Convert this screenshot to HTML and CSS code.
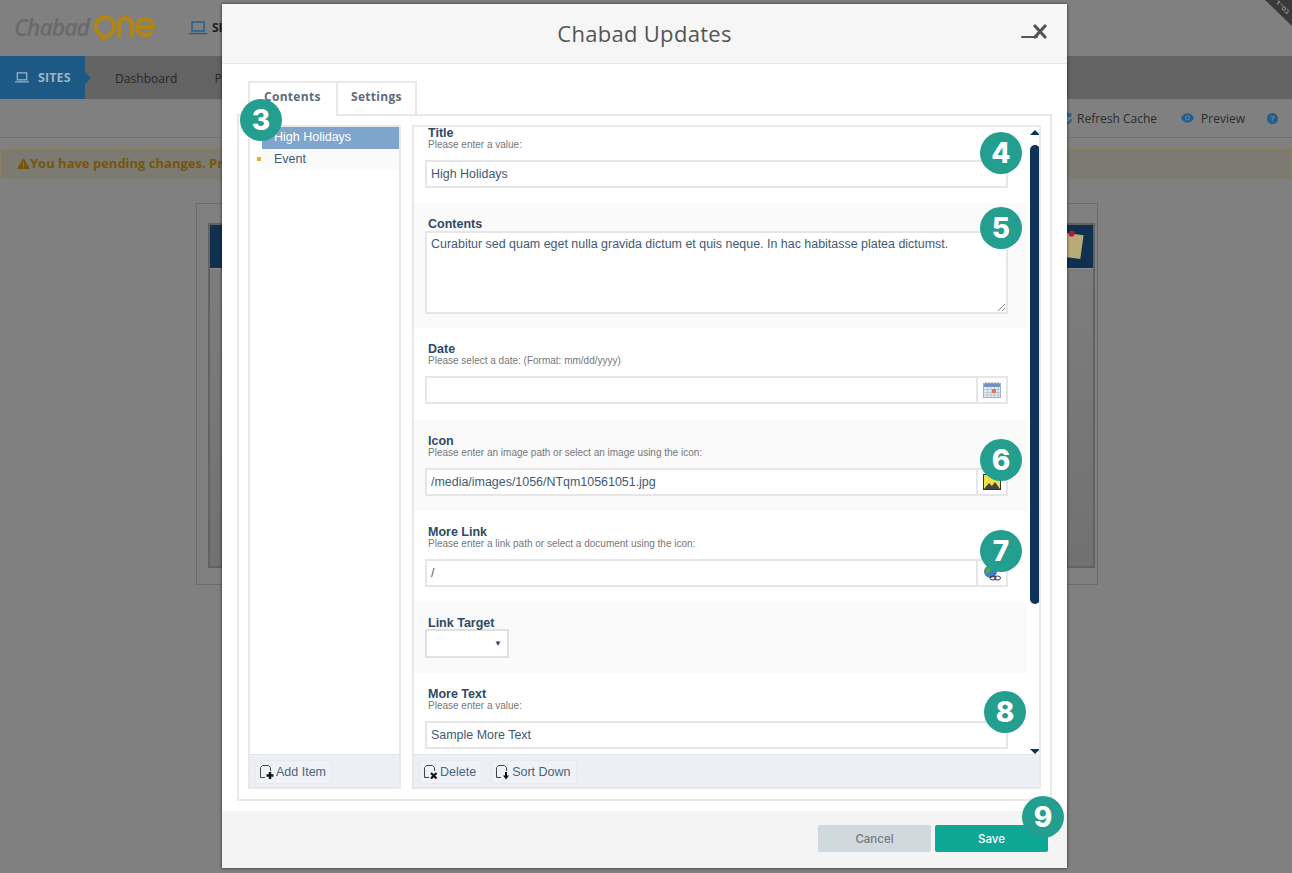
FILE: index.html
```html
<!DOCTYPE html>
<html lang="en">
<head>
    <meta charset="UTF-8">
    <title>Chabad Updates</title>
    <link rel="stylesheet" href="styles.css">
</head>
<body>
    <!-- page behind the dialog, colours already dimmed -->
    <div class="page">
        <header class="topbar">
            <div class="logo">
                <span class="logo-word">Chabad</span>
                <svg class="logo-mark" width="62" height="28" viewBox="0 0 62 28" fill="none" stroke="#b5860f" stroke-width="3.8" stroke-linecap="round" role="img" aria-label="One">
                    <path d="M8 21.200a9.200 9.200 0 1 1 5.500.2L8.500 25z"/>
                    <path d="M25 22V10.500a6.500 6.500 0 0 1 13 0V22"/>
                    <path d="M43 13h16a8 8 0 1 0-2.500 6"/>
                </svg>
            </div>
            <div class="section-name">
                <svg width="18" height="14" viewBox="0 0 18 14" fill="none" stroke="#1f5f8f" stroke-width="1.4"><rect x="3" y="1" width="12" height="9"/><path d="M0 12.6h18"/></svg>
                <span>SITES</span>
            </div>
            <div class="corner"><span>בס״ד</span></div>
        </header>
        <nav class="navbar">
            <div class="nav-active">
                <svg width="14" height="11" viewBox="0 0 18 14" fill="none" stroke="#9db3c4" stroke-width="1.6"><rect x="3" y="1" width="12" height="9"/><path d="M0 12.6h18"/></svg>
                <span>SITES</span>
            </div>
            <span class="nav-link">Dashboard</span>
            <span class="nav-link">Pages</span>
        </nav>
        <div class="actions">
            <span class="action action-refresh">
                <svg width="13" height="13" viewBox="0 0 14 14" fill="none" stroke="#1f5f8f" stroke-width="2"><path d="M2 6a5 5 0 0 1 9-2M12 8a5 5 0 0 1-9 2"/><path d="M11.500 1v3.500H8M2.500 13V9.500H6" stroke-width="1.400"/></svg>
                Refresh Cache
            </span>
            <span class="action">
                <svg width="13" height="10" viewBox="0 0 14 10"><path fill="#1f5f8f" d="M7 0c3 0 5.500 2 7 5-1.500 3-4 5-7 5S1.500 8 0 5c1.500-3 4-5 7-5z"/><circle cx="7" cy="5" r="2.600" fill="#808080"/><circle cx="7" cy="5" r="1.500" fill="#1f5f8f"/></svg>
                Preview
            </span>
            <span class="help">?</span>
        </div>
        <div class="alert">
            <svg width="13" height="11" viewBox="0 0 13 11"><path fill="#75560f" d="M6.500 0L13 11H0z"/><path fill="#7c7a70" d="M6 4h1v4H6zM6 8.800h1v1H6z"/></svg>
            <span>You have pending changes. Press Publish to apply them.</span>
        </div>
        <div class="preview">
            <div class="preview-inner">
                <div class="preview-head">
                    <div class="note"><i></i></div>
                </div>
            </div>
        </div>
    </div>

    <div class="modal">
        <div class="modal-head">
            <h1>Chabad Updates</h1>
            <svg class="close" width="28" height="16" viewBox="0 0 28 16" fill="none" stroke="#555" stroke-linecap="round"><path d="M1 14h15" stroke-width="2"/><path d="M14 3l10 11M24 3L14 14" stroke-width="3.200"/></svg>
        </div>

        <div class="modal-body">
            <div class="tabs">
                <div class="tab active">Contents</div>
                <div class="tab">Settings</div>
            </div>
            <div class="tab-panel">
                <div class="pane list-pane">
                    <ul class="items">
                        <li class="item selected">High Holidays</li>
                        <li class="item">Event</li>
                    </ul>
                    <div class="pane-tools">
                        <span class="tool">
                            <svg width="16" height="16" viewBox="0 0 16 16" fill="none"><path d="M6 13.500H1.500V3.500l2-2h6l2 2V7" stroke="#444"/><path d="M11 8v7M7.500 11.500h7" stroke="#111" stroke-width="2.400"/></svg>
                            Add Item
                        </span>
                    </div>
                </div>

                <div class="pane form-pane">
                    <div class="form-scroll">
                        <div class="form-inner">
                            <section class="field">
                                <label>Title</label>
                                <small>Please enter a value:</small>
                                <div class="input">High Holidays</div>
                            </section>
                            <section class="field band field-area">
                                <label>Contents</label>
                                <div class="input textarea">
                                    Curabitur sed quam eget nulla gravida dictum et quis neque. In hac habitasse platea dictumst.
                                    <svg class="grip" width="9" height="9" viewBox="0 0 9 9" stroke="#888"><path d="M1 8l7-7M5 8l3-3"/></svg>
                                </div>
                            </section>
                            <section class="field field-date">
                                <label>Date</label>
                                <small>Please select a date: (Format: mm/dd/yyyy)</small>
                                <div class="input-group">
                                    <div class="input"></div>
                                    <div class="input-btn">
                                        <svg width="18" height="16" viewBox="0 0 18 16"><rect x=".5" y="1.500" width="17" height="14" fill="#e6ebf4" stroke="#9fb0c8"/><rect x="1" y="2" width="16" height="3" fill="#6f93c9"/><path d="M3 0v3M6 0v3M9 0v3M12 0v3M15 0v3" stroke="#7f8ea6"/><path d="M1 7.500h16M1 10.500h16M1 13h16M4.500 5v10M8 5v10M11.500 5v10M15 5v10" stroke="#b9c6da"/><rect x="9" y="7" width="4" height="4" fill="#e0744f"/></svg>
                                    </div>
                                </div>
                            </section>
                            <section class="field band">
                                <label>Icon</label>
                                <small>Please enter an image path or select an image using the icon:</small>
                                <div class="input-group">
                                    <div class="input">/media/images/1056/NTqm10561051.jpg</div>
                                    <div class="input-btn">
                                        <svg width="18" height="16" viewBox="0 0 18 16"><rect x=".5" y=".5" width="17" height="15" fill="#f2e04a" stroke="#333"/><path d="M1 15l5-6 3 3 3-4 5 7z" fill="#444"/></svg>
                                    </div>
                                </div>
                            </section>
                            <section class="field">
                                <label>More Link</label>
                                <small>Please enter a link path or select a document using the icon:</small>
                                <div class="input-group">
                                    <div class="input">/</div>
                                    <div class="input-btn">
                                        <svg width="18" height="16" viewBox="0 0 18 16" fill="none"><circle cx="7.500" cy="6.500" r="6.500" fill="#3d7fc4"/><path d="M3 3c2-1 4-1 5 1S5 7 4 9 2 6 3 3z" fill="#5aa34a"/><ellipse cx="10" cy="13" rx="3" ry="2" stroke="#334"/><ellipse cx="14.500" cy="13" rx="3" ry="2" stroke="#334"/></svg>
                                    </div>
                                </div>
                            </section>
                            <section class="field band field-select">
                                <label>Link Target</label>
                                <div class="select"><span>▼</span></div>
                            </section>
                            <section class="field">
                                <label>More Text</label>
                                <small>Please enter a value:</small>
                                <div class="input">Sample More Text</div>
                            </section>
                        </div>
                        <div class="scrollbar">
                            <i class="arrow up"></i>
                            <div class="thumb"></div>
                            <i class="arrow down"></i>
                        </div>
                    </div>
                    <div class="pane-tools">
                        <span class="tool">
                            <svg width="16" height="16" viewBox="0 0 16 16" fill="none"><path d="M6 13.500H1.500V3.500l2-2h6l2 2V7" stroke="#444"/><path d="M8 9l5.500 5.500M13.500 9L8 14.500" stroke="#111" stroke-width="2.200"/></svg>
                            Delete
                        </span>
                        <span class="tool">
                            <svg width="16" height="16" viewBox="0 0 16 16" fill="none"><path d="M6 13.500H1.500V3.500l2-2h6l2 2V7" stroke="#444"/><path d="M11 8v4" stroke="#111" stroke-width="2"/><path d="M8 11.500h6L11 15.500z" fill="#111"/></svg>
                            Sort Down
                        </span>
                    </div>
                </div>
            </div>
        </div>

        <div class="modal-foot">
            <button class="btn btn-cancel">Cancel</button>
            <button class="btn btn-save">Save</button>
        </div>
    </div>

    <!-- numbered callouts over the dialog -->
    <span class="badge b3">3</span>
    <span class="badge b4">4</span>
    <span class="badge b5">5</span>
    <span class="badge b6">6</span>
    <span class="badge b7">7</span>
    <span class="badge b8">8</span>
    <span class="badge b9">9</span>
</body>
</html>
```

FILE: styles.css
```css
* {
    margin: 0;
    padding: 0;
    box-sizing: border-box;
}

html, body {
    height: 100%;
    overflow: hidden;
}

body {
    background: #808080;
    font-family: 'Liberation Sans', Arial, sans-serif;
    position: relative;
}

/* Page behind the dialog */
.page {
    height: 873px;
    font-family: 'Open Sans', sans-serif;
}

.topbar {
    height: 56px;
    padding-left: 14px;
    display: flex;
    align-items: center;
    position: relative;
}

.logo {
    display: flex;
    align-items: center;
    width: 175px;
}

.logo-word {
    font-size: 23px;
    font-style: italic;
    font-weight: 600;
    letter-spacing: -1px;
    color: #6a6a6a;
    width: 80px;
    margin-top: -3px;
}

.section-name {
    display: flex;
    align-items: center;
    gap: 5px;
    font-size: 12px;
    font-weight: 700;
    color: #1c1c1c;
    margin-top: -1px;
}

.corner {
    position: absolute;
    top: 0;
    right: 0;
    width: 27px;
    height: 26px;
    background: #3a3a3a;
    clip-path: polygon(0 0, 100% 0, 100% 100%);
}

.corner span {
    position: absolute;
    top: 3px;
    right: 1px;
    font: 7px 'DejaVu Sans', sans-serif;
    color: #bbb;
    transform: rotate(45deg);
}

.navbar {
    height: 43px;
    background: #636363;
    display: flex;
    align-items: center;
}

.nav-active {
    width: 85px;
    height: 43px;
    background: #1c5a85;
    display: flex;
    align-items: center;
    gap: 9px;
    padding-left: 15px;
    font-size: 12.5px;
    font-weight: 700;
    letter-spacing: 0.1px;
    color: #9db3c4;
    position: relative;
    margin-right: 30px;
}

.nav-active::after {
    content: "";
    position: absolute;
    left: 85px;
    top: 16px;
    border-left: 6px solid #1c5a85;
    border-top: 6px solid transparent;
    border-bottom: 6px solid transparent;
}

.nav-link {
    font-size: 12.1px;
    color: #262626;
    margin-right: 37px;
    padding-top: 1px;
}

.actions {
    height: 39px;
    border-bottom: 1px solid #8c6f2c;
    display: flex;
    justify-content: flex-end;
    align-items: center;
    gap: 24px;
    padding-right: 14px;
    font-size: 12px;
    color: #2c2c2c;
}

.action {
    display: flex;
    align-items: center;
    gap: 7px;
}

.action-refresh {
    gap: 4px;
}

.help {
    width: 11px;
    height: 11px;
    border-radius: 50%;
    background: #1f5f8f;
    color: #808080;
    font-size: 9px;
    font-weight: 700;
    line-height: 11px;
    text-align: center;
    margin-left: -2px;
}

.alert {
    margin-top: 10px;
    height: 32px;
    background: #7d7a71;
    border: 1px solid #8a7f63;
    border-radius: 4px;
    display: flex;
    align-items: center;
    padding: 0 0 2px 16px;
    font-size: 13px;
    font-weight: 700;
    color: #75560f;
}

.preview {
    margin: 23px 0 0 196px;
    width: 902px;
    height: 382px;
    border: 1px solid #6b6b6b;
    padding: 19px 2px 16px 11px;
}

.preview-inner {
    height: 100%;
    border: 2px solid #626262;
    background: linear-gradient(#7f7f7f, #717171);
}

.preview-head {
    height: 44px;
    background: #10304f;
    border-bottom: 1px solid #8a8a8a;
    position: relative;
}

.note {
    position: absolute;
    top: 9px;
    right: 11px;
    width: 17px;
    height: 24px;
    background: #b9ab78;
    transform: rotate(8deg);
}

.note i {
    position: absolute;
    top: -3px;
    left: 2px;
    width: 6px;
    height: 6px;
    border-radius: 50%;
    background: #b51a2e;
}

/* Dialog */
.modal {
    position: absolute;
    top: 4px;
    left: 222px;
    width: 845px;
    height: 864px;
    background: #fff;
    box-shadow: 0 0 3px rgba(0,0,0,0.7);
    display: flex;
    flex-direction: column;
}

.modal-head {
    height: 60px;
    flex: none;
    background: #f6f6f6;
    border-bottom: 1px solid #e8e8e8;
    display: flex;
    align-items: center;
    justify-content: center;
    position: relative;
}

.modal-head h1 {
    font: 400 22px 'Open Sans', sans-serif;
    color: #555;
    letter-spacing: 0.3px;
    margin-top: -1px;
}

.close {
    position: absolute;
    right: 18px;
    top: 19px;
}

.modal-body {
    flex: 1;
    padding: 17px 15px 10px;
    min-height: 0;
    display: flex;
    flex-direction: column;
}

.tabs {
    display: flex;
    padding-left: 11px;
    margin-bottom: -2px;
    position: relative;
}

.tab {
    height: 35px;
    padding: 0 13px;
    border: 2px solid #e8e8e8;
    font: 700 12px/28px 'Open Sans', sans-serif;
    letter-spacing: 0.3px;
    color: #5d6b7c;
}

.tab.active {
    width: 88px;
    border-right: 0;
    border-bottom-color: #fff;
    padding: 0 14px;
}

.tab + .tab {
    width: 81px;
}

.tab-panel {
    flex: 1;
    min-height: 0;
    border: 2px solid #e8e8e8;
    padding: 9px 9px 10px;
    display: flex;
    gap: 11px;
}

.pane {
    border: 2px solid #e8e8e8;
    display: flex;
    flex-direction: column;
    min-height: 0;
}

.list-pane {
    width: 153px;
    flex: none;
}

.form-pane {
    flex: 1;
    min-width: 0;
}

.items {
    flex: 1;
    list-style: none;
    padding-left: 12px;
}

.item {
    height: 21px;
    padding-left: 12px;
    font-size: 12.5px;
    line-height: 21px;
    color: #3f5a75;
    background: #fafafa;
    position: relative;
}

.item.selected {
    height: 22px;
    background: #7fa5cc;
    color: #fff;
}

.item:not(.selected)::before {
    content: "";
    position: absolute;
    left: -5px;
    top: 8px;
    width: 4px;
    height: 4px;
    background: #f7ab1b;
}

.pane-tools {
    height: 33px;
    flex: none;
    background: #eceff4;
    border-top: 1px solid #e2e5ea;
    display: flex;
    align-items: center;
    gap: 9px;
    padding: 1px 0 0 5px;
}

.tool {
    height: 24px;
    padding: 0 5px 0 3px;
    background: #eff2f6;
    border: 1px solid #e6e9ee;
    border-radius: 3px;
    display: flex;
    align-items: center;
    gap: 1px;
    font-size: 12.5px;
    color: #4a6482;
}

.form-scroll {
    flex: 1;
    min-height: 0;
    overflow: hidden;
    display: flex;
}

/* scrolled a little, so the first label sits against the top edge */
.form-inner {
    width: 613px;
    flex: none;
    margin-top: -15px;
}

.field {
    height: 91px;
    padding: 15px 19px 0 11px;
}

.field.band {
    background: #fafafa;
}

.field-area {
    height: 125px;
}

.field-date {
    height: 92px;
}

.field-select {
    height: 71px;
}

.field label {
    display: block;
    margin-left: 3px;
    font-size: 12.5px;
    line-height: 12px;
    font-weight: 700;
    color: #2e4a68;
}

.field small {
    display: block;
    margin: 0 0 10px 3px;
    font-size: 10px;
    line-height: 11px;
    color: #777;
}

.input {
    height: 28px;
    background: #fff;
    border: 2px solid #e6e6e6;
    padding-left: 4px;
    font-size: 12.45px;
    line-height: 25px;
    color: #3f5a75;
}

.textarea {
    height: 83px;
    margin-top: 1px;
    line-height: 22px;
    position: relative;
}

.grip {
    position: absolute;
    right: 0;
    bottom: 0;
}

.input-group {
    display: flex;
}

.input-group .input {
    flex: 1;
    border-right: 0;
}

.input-btn {
    width: 32px;
    height: 28px;
    background: #fff;
    border: 2px solid #e6e6e6;
    display: flex;
    align-items: center;
    justify-content: center;
}

.select {
    width: 84px;
    height: 29px;
    background: #fff;
    border: 2px solid #e0e0e0;
    padding-right: 5px;
    font-size: 8px;
    line-height: 25px;
    color: #2e4a68;
    text-align: right;
}

.scrollbar {
    width: 10px;
    margin-left: 3px;
    display: flex;
    flex-direction: column;
    align-items: center;
}

.thumb {
    width: 10px;
    height: 459px;
    margin-top: 10px;
    flex: none;
    background: #0e3259;
    border-radius: 5px;
}

.arrow {
    width: 0;
    height: 0;
    flex: none;
    border-left: 5px solid transparent;
    border-right: 5px solid transparent;
}

.arrow.up {
    margin-top: 3px;
    border-bottom: 5px solid #0e3259;
}

.arrow.down {
    margin-top: 145px;
    border-top: 5px solid #0e3259;
}

.modal-foot {
    height: 57px;
    flex: none;
    background: #f4f4f4;
    display: flex;
    justify-content: flex-end;
    gap: 4px;
    padding: 14px 19px 0 0;
}

.btn {
    width: 113px;
    height: 27px;
    border: 0;
    border-radius: 2px;
    font: 500 11.5px 'Inter', sans-serif;
}

.btn-cancel {
    background: #d0d9de;
    color: #777;
}

.btn-save {
    background: #0ea695;
    color: #fff;
}

/* Callouts */
.badge {
    position: absolute;
    width: 42px;
    height: 42px;
    border-radius: 50%;
    background: #239e8f;
    color: #fff;
    font: 800 28px/42px 'Inter', sans-serif;
    text-align: center;
}

.b3 { left: 240px; top: 99px; }
.b4 { left: 980px; top: 132px; }
.b5 { left: 980px; top: 207px; }
.b6 { left: 980px; top: 439px; }
.b7 { left: 980px; top: 530px; }
.b8 { left: 984px; top: 691px; }
.b9 { left: 1022px; top: 796px; }
```
